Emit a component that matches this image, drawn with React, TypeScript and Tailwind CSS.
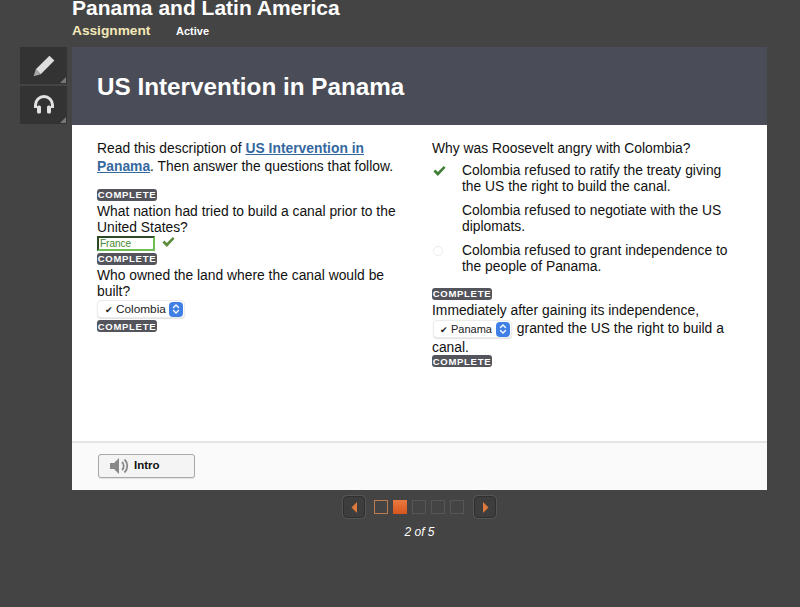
import React from 'react';

const FONT = "font-['Liberation_Sans',Arial,sans-serif]";

const CompleteBadge: React.FC = () => (
    <div className="flex h-[12px] w-[60px] items-center justify-center rounded-[3px] bg-[#54555c] text-[9.5px] font-bold leading-none tracking-[0.7px] text-white">
        COMPLETE
    </div>
);

const FakeSelect: React.FC<{ label: string; width: string; small?: boolean }> = ({ label, width, small }) => (
    <span className={`inline-flex h-[18px] items-center justify-between rounded-[4px] border border-[#ececec] bg-white pr-[1px] align-middle shadow-[0_1px_1px_rgba(0,0,0,0.12)] ${width} ${small ? 'pl-[6px] text-[11px]' : 'pl-[7px] text-[11.8px]'}`}>
        <span className="text-[#222]"><span className="mr-[3px] text-[9px]">✔</span>{label}</span>
        <span className="flex h-[15px] w-[14px] items-center justify-center rounded-[4px] bg-[#3f7fe6]">
            <svg width="8" height="12" viewBox="0 0 8 12" fill="none" stroke="white" strokeWidth="1.4" strokeLinecap="round" strokeLinejoin="round">
                <path d="M1.5 4.5 4 2l2.5 2.5" />
                <path d="M1.5 7.5 4 10l2.5-2.5" />
            </svg>
        </span>
    </span>
);

const Check: React.FC<{ className?: string; color: string; width: number; height: number }> = ({ className, color, width, height }) => (
    <svg className={className} width={width} height={height} viewBox="0 0 14 12" fill={color}>
        <path d="M0.5 6.5 2.6 4.4 5.2 7 11.6 0.5 13.5 2.4 5.2 11.5z" />
    </svg>
);

const Option: React.FC<{ marker?: React.ReactNode; children: React.ReactNode }> = ({ marker, children }) => (
    <div className="flex">
        <div className="flex h-[16px] w-[30px] shrink-0 items-center pl-[1px]">{marker}</div>
        <div>{children}</div>
    </div>
);

const PagerArrow: React.FC<{ flip?: boolean }> = ({ flip }) => (
    <div className="flex h-[22px] w-[22px] items-center justify-center rounded-[4px] border border-[#2f2f2f] bg-[#3d3d3d] shadow-[0_0_0_1px_#555]">
        <svg width="7" height="11" viewBox="0 0 7 11" fill="#e07a3c">
            <path d={flip ? 'M1 0 6.5 5.5 1 11z' : 'M6 0 0.5 5.5 6 11z'} />
        </svg>
    </div>
);

export default function App() {
    return (
        <div className={`${FONT} h-[607px] w-[800px] overflow-hidden bg-[#444444]`}>
            {/* header, title is cut off by the top of the window */}
            <div className="-mt-[4px] h-[51px] pl-[72px]">
                <div className="text-[21px] font-bold leading-[23px] text-white">Panama and Latin America</div>
                <div className="mt-[2px] flex items-center font-bold">
                    <span className="w-[104px] text-[13.7px] leading-[20px] text-[#f4e9b8]">Assignment</span>
                    <span className="text-[11px] text-white">Active</span>
                </div>
            </div>

            <div className="flex">
                {/* tool rail */}
                <div className="ml-[20px] mr-[5px] flex w-[47px] flex-col gap-[2px]">
                    <div className="relative flex h-[37px] items-center justify-center bg-[#333333]">
                        <svg width="24" height="24" viewBox="0 0 22 22">
                            <path d="M16 1.5 20.5 6 8 18.5 3.5 14z" fill="#dedede" />
                            <path d="M3.5 14 8 18.5 1.5 20.5z" fill="#a8a8a8" />
                        </svg>
                        <span className="absolute bottom-[1px] right-[1px] h-0 w-0 border-b-[6px] border-l-[6px] border-b-[#777] border-l-transparent" />
                    </div>
                    <div className="relative flex h-[38px] items-center justify-center bg-[#333333]">
                        <svg width="24" height="20" viewBox="0 0 24 20" fill="none">
                            <path d="M3.5 13V10a8.5 8.5 0 0 1 17 0v3" stroke="#e2e2e2" strokeWidth="3" />
                            <rect x="5" y="10.5" width="4" height="8" rx="1.5" fill="#e2e2e2" />
                            <rect x="15" y="10.5" width="4" height="8" rx="1.5" fill="#e2e2e2" />
                        </svg>
                        <span className="absolute bottom-[1px] right-[1px] h-0 w-0 border-b-[6px] border-l-[6px] border-b-[#777] border-l-transparent" />
                    </div>
                </div>

                {/* activity card */}
                <div className="flex h-[443px] w-[695px] flex-col bg-white">
                    <div className="flex h-[78px] items-center bg-[#4a4d57] pl-[25px]">
                        <h1 className="mt-[2px] text-[24.25px] font-bold text-white">US Intervention in Panama</h1>
                    </div>

                    <div className="flex flex-1 pl-[25px] pt-[14px] text-[13.85px] leading-[18px] text-[#111111]">
                        <div className="w-[335px]">
                            <p className="w-[300px]">
                                Read this description of{' '}
                                <a className="font-bold text-[#35689f] underline">US Intervention in Panama</a>. Then answer the questions that follow.
                            </p>
                            <div className="mt-[14px]"><CompleteBadge /></div>
                            <p className="mt-[3px] w-[310px] leading-[15.5px]">What nation had tried to build a canal prior to the United States?</p>
                            <div className="flex h-[17px] items-center">
                                <span className="flex h-[15px] w-[58px] items-center border-2 border-[#6fbf57] border-l-[#2d4a26] border-t-[#2d4a26] pl-[1px] text-[10px] text-[#3f8a30]">France</span>
                                <Check className="ml-[7px] -mt-[3px]" color="#5b8c3a" width={13} height={12} />
                            </div>
                            <div className="mt-[1px]"><CompleteBadge /></div>
                            <p className="mt-[3px] w-[300px] leading-[15.5px]">Who owned the land where the canal would be built?</p>
                            <FakeSelect label="Colombia" width="w-[88px]" />
                            <div className="mt-[2px]"><CompleteBadge /></div>
                        </div>

                        <div className="w-[320px]">
                            <p>Why was Roosevelt angry with Colombia?</p>
                            <div className="mt-[6px] flex w-[305px] flex-col gap-[9px] leading-[15.5px]">
                                <Option marker={<Check color="#3f7f35" width={13} height={12} />}>Colombia refused to ratify the treaty giving the US the right to build the canal.</Option>
                                <Option>Colombia refused to negotiate with the US diplomats.</Option>
                                <Option marker={<span className="h-[10px] w-[10px] rounded-full border border-[#ececec]" />}>Colombia refused to grant independence to the people of Panama.</Option>
                            </div>
                            <div className="mt-[14px]"><CompleteBadge /></div>
                            <p className="mt-[1px] w-[305px] leading-[18px]">
                                Immediately after gaining its independence,{' '}
                                <FakeSelect label="Panama" width="w-[79px] mx-[1px]" small /> granted the US the right to build a canal.
                            </p>
                            <div className="-mt-[1px]"><CompleteBadge /></div>
                        </div>
                    </div>

                    <div className="flex h-[49px] items-center border-t-2 border-[#e4e4e4] bg-[#fafafa] pb-[1px] pl-[26px]">
                        <div className="flex h-[24px] w-[97px] items-center rounded-[3px] border border-[#a8a8a8] bg-[#f4f4f4] pl-[10px] shadow-[0_1px_1px_rgba(0,0,0,0.1)]">
                            <svg width="20" height="20" viewBox="0 0 20 20" fill="none">
                                <path d="M1 7h4l5-5v16l-5-5H1z" fill="#888888" />
                                <path d="M13 6a5.5 5.5 0 0 1 0 8M15.5 3.5a9 9 0 0 1 0 13" stroke="#888888" strokeWidth="1.8" />
                            </svg>
                            <span className="ml-[5px] text-[11.5px] font-bold text-[#111]">Intro</span>
                        </div>
                    </div>
                </div>
            </div>

            {/* pager */}
            <div className="ml-[343px] mt-[6px] flex w-[153px] items-center justify-between">
                <PagerArrow />
                <div className="-ml-[2px] flex gap-[5px]">
                    <span className="h-[14px] w-[14px] border border-[#c07a50]" />
                    <span className="h-[14px] w-[14px] bg-gradient-to-b from-[#ea7a3e] to-[#d9541e]" />
                    <span className="h-[14px] w-[14px] border border-[#565656]" />
                    <span className="h-[14px] w-[14px] border border-[#565656]" />
                    <span className="h-[14px] w-[14px] border border-[#565656]" />
                </div>
                <PagerArrow flip />
            </div>
            <div className="ml-[343px] mt-[5px] w-[153px] text-center text-[12px] italic text-white">2 of 5</div>
        </div>
    );
}
